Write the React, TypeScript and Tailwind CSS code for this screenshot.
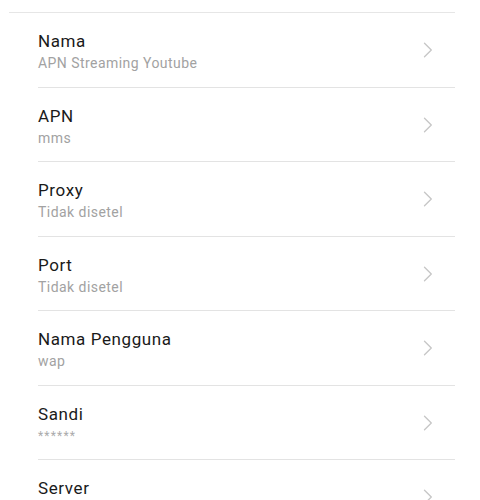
import React from "react";

const rows: { title: string; sub: string; h: string }[] = [
  { title: "Nama", sub: "APN Streaming Youtube", h: "h-[75px]" },
  { title: "APN", sub: "mms", h: "h-[74px]" },
  { title: "Proxy", sub: "Tidak disetel", h: "h-[75px]" },
  { title: "Port", sub: "Tidak disetel", h: "h-[74px]" },
  { title: "Nama Pengguna", sub: "wap", h: "h-[75px]" },
  { title: "Sandi", sub: "******", h: "h-[74px]" },
  { title: "Server", sub: "Tidak disetel", h: "h-[75px]" },
];

function Chevron() {
  return (
    <svg width="10" height="16" viewBox="0 0 10 16" fill="none" className="shrink-0">
      <path d="M1.5 1.2 L8.3 8 L1.5 14.8" stroke="#c6c6c6" strokeWidth="1.3" strokeLinecap="round" strokeLinejoin="round" />
    </svg>
  );
}

export default function App() {
  return (
    <div className="w-[480px] h-[500px] overflow-hidden bg-white" style={{ fontFamily: "Roboto, 'Noto Sans', sans-serif" }}>
      <div className="pt-[12px]">
        <div className="ml-[9px] mr-[25px] border-t border-[#e6e6e6]" />
        <div className="ml-[38px] mr-[25px]">
          {rows.map((r, i) => (
            <div key={i} className={`${r.h} border-b border-[#e3e3e3] flex items-start justify-between pt-[17px]`}>
              <div className="flex flex-col">
                <div className="text-[17px] leading-[22px] tracking-[0.6px] text-[#1a1a1a]">{r.title}</div>
                {r.title === "Sandi" ? (
                  <div className="text-[12px] leading-[20px] mt-[1px] text-[#ababab] tracking-[1.2px]">{r.sub}</div>
                ) : (
                  <div className="text-[14px] leading-[20px] mt-[1px] text-[#a2a2a2] tracking-[0.45px]">{r.sub}</div>
                )}
              </div>
              <div className="mr-[22px] mt-[12px]">
                <Chevron />
              </div>
            </div>
          ))}
        </div>
      </div>
    </div>
  );
}
